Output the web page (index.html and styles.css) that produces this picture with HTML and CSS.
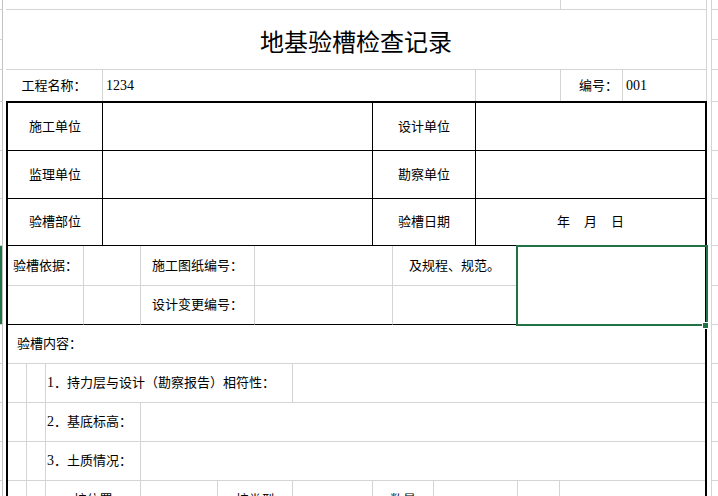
FILE: index.html
```html
<!DOCTYPE html>
<html lang="zh-CN">
<head>
<meta charset="utf-8">
<title>地基验槽检查记录</title>
<link rel="stylesheet" href="styles.css">
</head>
<body>
<div class="sheet">
  <div class="gutter-l">
    <div class="gl h10"></div>
    <div class="gl h30"></div>
    <div class="gl h30"></div>
    <div class="gl h32"></div>
    <div class="gl h49"></div>
    <div class="gl h48"></div>
    <div class="gl h47"></div>
    <div class="gl h40 sel"></div>
    <div class="gl h39 sel2"></div>
    <div class="gl h39"></div>
    <div class="gl h39"></div>
    <div class="gl h39"></div>
    <div class="gl h39"></div>
    <div class="gl h39"></div>
  </div>

  <div class="main">
    <div class="band band-a">
      <div class="c gr"></div>
      <div class="c gr"></div>
    </div>
    <div class="band band-title">
      <div class="title">地基验槽检查记录</div>
    </div>
    <div class="band band-name">
      <div class="c gr center">工程名称：</div>
      <div class="c gr left num">1234</div>
      <div class="c gr"></div>
      <div class="c gr right">编号：</div>
      <div class="c gr left num">001</div>
    </div>

    <div class="table">
      <div class="row r-unit h48 bk-b">
        <div class="c bk center">施工单位</div>
        <div class="c bk"></div>
        <div class="c bk center">设计单位</div>
        <div class="c"></div>
      </div>
      <div class="row r-unit h48 bk-b">
        <div class="c bk center">监理单位</div>
        <div class="c bk"></div>
        <div class="c bk center">勘察单位</div>
        <div class="c"></div>
      </div>
      <div class="row r-unit h47 bk-b">
        <div class="c bk center">验槽部位</div>
        <div class="c bk"></div>
        <div class="c bk center">验槽日期</div>
        <div class="c center date"><span>年</span><span>月</span><span>日</span></div>
      </div>
      <div class="basis">
        <div class="c gr gr-b center">验槽依据：</div>
        <div class="c gr gr-b"></div>
        <div class="c gr gr-b center">施工图纸编号：</div>
        <div class="c gr gr-b"></div>
        <div class="c gr gr-b center">及规程、规范。</div>
        <div class="c bk-b merged"></div>
        <div class="c gr bk-b"></div>
        <div class="c gr bk-b"></div>
        <div class="c gr bk-b center">设计变更编号：</div>
        <div class="c gr bk-b"></div>
        <div class="c gr bk-b"></div>
      </div>
      <div class="row r-one h39 gr-b">
        <div class="c left pad9">验槽内容：</div>
      </div>
      <div class="row r-item1 h39 gr-b">
        <div class="c gr"></div>
        <div class="c gr"></div>
        <div class="c gr left item"><span class="num">1</span>．持力层与设计（勘察报告）相符性：</div>
        <div class="c"></div>
      </div>
      <div class="row r-item h39 gr-b">
        <div class="c gr"></div>
        <div class="c gr"></div>
        <div class="c gr left item"><span class="num">2</span>．基底标高：</div>
        <div class="c"></div>
      </div>
      <div class="row r-item h39 gr-b">
        <div class="c gr"></div>
        <div class="c gr"></div>
        <div class="c gr left item"><span class="num">3</span>．土质情况：</div>
        <div class="c"></div>
      </div>
      <div class="row r-last h39 gr-b">
        <div class="c gr"></div>
        <div class="c gr"></div>
        <div class="c gr center">桩位置</div>
        <div class="c gr"></div>
        <div class="c gr center">桩类型</div>
        <div class="c gr"></div>
        <div class="c gr center">数量</div>
        <div class="c gr"></div>
        <div class="c gr"></div>
        <div class="c"></div>
      </div>
    </div>
  </div>

  <div class="gutter-r">
    <div class="grr h10"></div>
    <div class="grr h30"></div>
    <div class="grr h30"></div>
    <div class="grr h32"></div>
    <div class="grr h49"></div>
    <div class="grr h48"></div>
    <div class="grr h47"></div>
    <div class="grr h40"></div>
    <div class="grr h39"></div>
    <div class="grr h39"></div>
    <div class="grr h39"></div>
    <div class="grr h39"></div>
    <div class="grr h39"></div>
    <div class="grr h39"></div>
  </div>

  <div class="selection"><div class="handle"></div></div>
</div>
</body>
</html>
```

FILE: styles.css
```css
* {
  box-sizing: border-box;
}

html, body {
  margin: 0;
  padding: 0;
  background: #ffffff;
}

body {
  width: 718px;
  height: 496px;
  overflow: hidden;
  font-family: "Liberation Serif", "Noto Sans CJK SC", sans-serif;
  font-size: 13px;
  color: #000000;
}

.sheet {
  position: relative;
  display: flex;
  align-items: flex-start;
  width: 718px;
  height: 496px;
  overflow: hidden;
}

/* heights */
.h10 { height: 10px; }
.h30 { height: 30px; }
.h32 { height: 32px; }
.h39 { height: 39px; }
.h40 { height: 40px; }
.h47 { height: 47px; }
.h48 { height: 48px; }
.h49 { height: 49px; }

/* left row-header edge */
.gutter-l {
  display: flex;
  flex-direction: column;
  width: 3px;
  margin-right: 3px;
  flex: none;
}

.gl {
  width: 3px;
  border-right: 1px solid #c2c2c2;
  border-bottom: 1px solid #d4d4d4;
}

.gl.sel,
.gl.sel2 {
  background: linear-gradient(to right, #217346 0 2px, transparent 2px);
}

.gl.sel {
  border-bottom: none;
}

/* right edge */
.gutter-r {
  display: flex;
  flex-direction: column;
  width: 11px;
  flex: none;
}

.grr {
  margin-left: 4px;
  width: 7px;
  border-left: 1px solid #d4d4d4;
  border-bottom: 1px solid #d4d4d4;
}

/* main sheet */
.main {
  width: 701px;
  flex: none;
  display: flex;
  flex-direction: column;
}

.band {
  display: grid;
  width: 701px;
}

.band-a {
  height: 10px;
  grid-template-columns: 555px 146px;
  border-bottom: 1px solid #d4d4d4;
}

.band-title {
  height: 60px;
  border-bottom: 1px solid #d4d4d4;
  border-right: 1px solid #d4d4d4;
  display: flex;
  align-items: center;
  justify-content: center;
}

.title {
  font-family: "Noto Sans CJK SC", sans-serif;
  font-size: 24px;
  line-height: 24px;
  margin-top: 2px;
}

.band-name {
  height: 31px;
  grid-template-columns: 97px 373px 85px 62px 84px;
}

.c {
  display: flex;
  align-items: center;
  min-width: 0;
  white-space: nowrap;
  line-height: 16px;
}

.c.center {
  justify-content: center;
}

.c.left {
  justify-content: flex-start;
  padding-left: 3px;
}

.c.right {
  justify-content: flex-end;
  padding-right: 4px;
}

.c.pad9 {
  padding-left: 9px;
}

.c.item {
  padding-left: 1px;
}

.c.gr {
  border-right: 1px solid #d4d4d4;
}

.c.bk {
  border-right: 1px solid #000000;
}

.num {
  font-family: "Liberation Serif", serif;
  font-size: 14px;
}

.date span + span {
  margin-left: 14px;
}

/* table */
.table {
  width: 701px;
  border-top: 2px solid #000000;
  border-left: 2px solid #000000;
  border-right: 2px solid #000000;
}

.row {
  display: grid;
  width: 697px;
}

.bk-b { border-bottom: 1px solid #000000; }
.gr-b { border-bottom: 1px solid #d4d4d4; }

.r-unit  { grid-template-columns: 95px 270px 103px 229px; }
.r-one   { grid-template-columns: 697px; }
.r-item1 { grid-template-columns: 19px 19px 247px 412px; }
.r-item  { grid-template-columns: 19px 19px 95px 564px; }
.r-last  { grid-template-columns: 19px 19px 95px 77px 75px 80px 61px 84px 42px 145px; }

/* basis block: two rows, last column merged */
.basis {
  display: grid;
  width: 697px;
  grid-template-columns: 76px 57px 114px 138px 124px 188px;
  grid-template-rows: 40px 39px;
}

.basis .merged {
  grid-column: 6;
  grid-row: 1 / span 2;
}

/* active cell selection */
.selection {
  position: absolute;
  left: 516px;
  top: 245px;
  width: 192px;
  height: 81px;
  border: 2px solid #217346;
}

.handle {
  position: absolute;
  right: -3px;
  bottom: -5px;
  width: 7px;
  height: 7px;
  background: #217346;
  border: 1px solid #ffffff;
}
```
